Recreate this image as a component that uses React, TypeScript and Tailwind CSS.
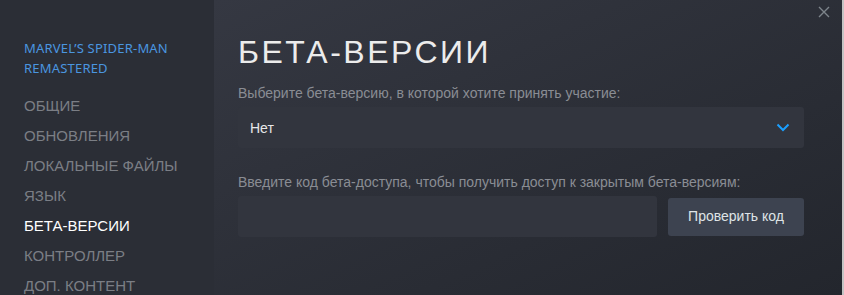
import React from 'react';

const navItems = [
  'ОБЩИЕ',
  'ОБНОВЛЕНИЯ',
  'ЛОКАЛЬНЫЕ ФАЙЛЫ',
  'ЯЗЫК',
  'БЕТА-ВЕРСИИ',
  'КОНТРОЛЛЕР',
  'ДОП. КОНТЕНТ',
];

export default function App() {
  return (
    <div className="flex h-[295px] w-[844px] overflow-hidden font-['Liberation_Sans',Arial,sans-serif]">
      <aside className="w-[214px] shrink-0 bg-[#2b2e36] pl-6 pt-[38px]">
        <div className="font-['Noto_Sans',sans-serif] text-[13px] leading-5 tracking-[0.2px] text-[#4a96e0]">
          MARVEL’S SPIDER-MAN
          <br />
          REMASTERED
        </div>
        <nav className="mt-[13px] flex flex-col">
          {navItems.map((item) => (
            <div
              key={item}
              className={
                item === 'БЕТА-ВЕРСИИ'
                  ? 'h-[30px] text-[15px] leading-[30px] text-white'
                  : 'h-[30px] text-[15px] leading-[30px] text-[#7b7e85]'
              }
            >
              {item}
            </div>
          ))}
        </nav>
      </aside>

      <main className="relative flex-1 bg-gradient-to-br from-[#353842] to-[#23262d] pl-6 pr-[38px] pt-[34px]">
        <button className="absolute right-[12px] top-[6px] text-[#7d858b]">
          <svg width="12" height="12" viewBox="0 0 12 12" fill="none" stroke="currentColor" strokeWidth="1.4">
            <path d="M1 1L11 11M11 1L1 11" />
          </svg>
        </button>

        <h1 className="text-[32px] leading-[36px] tracking-[2.5px] text-[#ececec]">БЕТА-ВЕРСИИ</h1>

        <div className="mt-[15px] text-[14px] leading-4 text-[#8a8d94]">
          Выберите бета-версию, в которой хотите принять участие:
        </div>
        <div className="mt-[6px] flex h-[41px] items-center justify-between rounded-[3px] bg-[#32353e] pl-3 pr-[14px]">
          <span className="mt-[2px] text-[14px] text-[#e6e7e9]">Нет</span>
          <svg width="14" height="9" viewBox="0 0 14 9" fill="none" stroke="#1a9fff" strokeWidth="2">
            <path d="M1.5 1.5L7 7L12.5 1.5" />
          </svg>
        </div>

        <div className="mt-[26px] text-[14px] leading-4 text-[#8a8d94]">
          Введите код бета-доступа, чтобы получить доступ к закрытым бета-версиям:
        </div>
        <div className="mt-[6px] flex items-center gap-[11px]">
          <div className="h-[41px] flex-1 rounded-[3px] bg-[#32353e]" />
          <button className="h-[38px] w-[136px] rounded-[3px] bg-[#3d4350] text-[14px] text-[#dfe3e6]">
            Проверить код
          </button>
        </div>
      </main>
      <div className="w-[2px] shrink-0 bg-[#c4c4c4]" />
    </div>
  );
}
